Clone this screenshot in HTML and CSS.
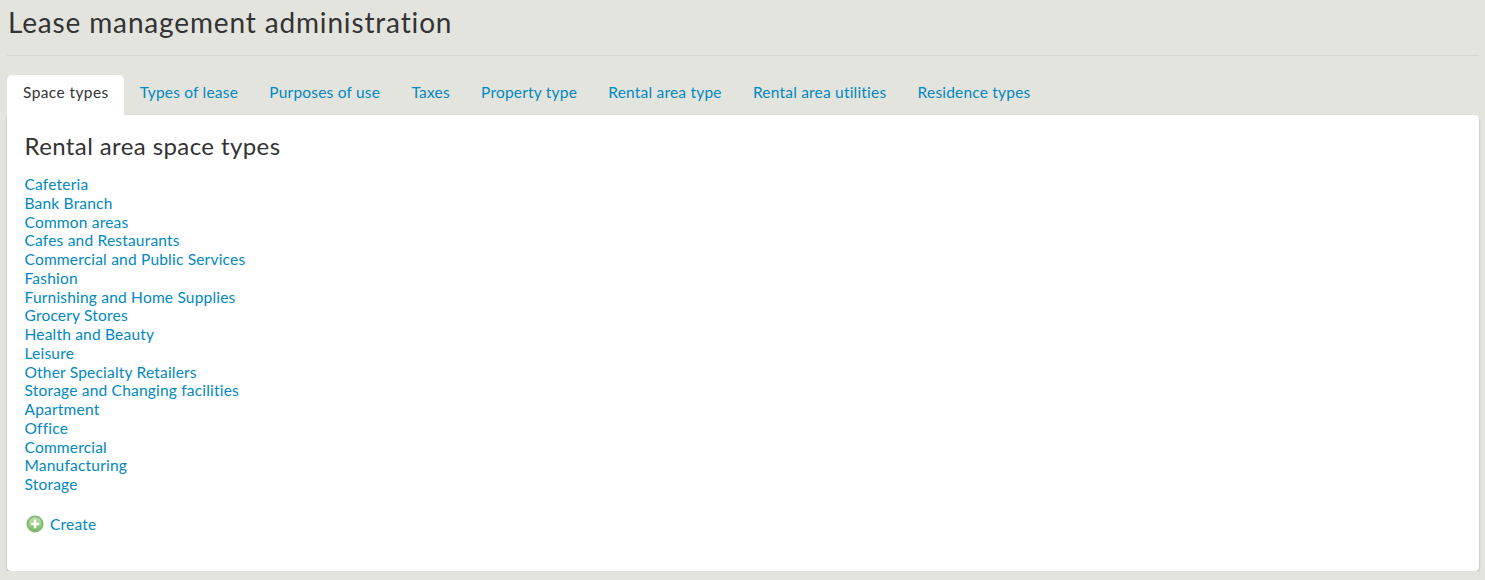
FILE: index.html
```html
<!DOCTYPE html>
<html lang="en">

	<head>
		<meta charset="UTF-8">
		<meta name="viewport" content="width=device-width, initial-scale=1.0">
		<title>Lease management administration</title>
		<link rel="stylesheet" href="styles.css">
	</head>

	<body>
		<h1 class="page-title">Lease management administration</h1>
		<div class="tabs">
			<a href="#" class="tab active">Space types</a>
			<a href="#" class="tab">Types of lease</a>
			<a href="#" class="tab">Purposes of use</a>
			<a href="#" class="tab">Taxes</a>
			<a href="#" class="tab">Property type</a>
			<a href="#" class="tab">Rental area type</a>
			<a href="#" class="tab">Rental area utilities</a>
			<a href="#" class="tab">Residence types</a>
		</div>
		<div class="panel">
			<h2 class="panel-title">Rental area space types</h2>
			<ul class="type-list">
				<li><a href="#">Cafeteria</a></li>
				<li><a href="#">Bank Branch</a></li>
				<li><a href="#">Common areas</a></li>
				<li><a href="#">Cafes and Restaurants</a></li>
				<li><a href="#">Commercial and Public Services</a></li>
				<li><a href="#">Fashion</a></li>
				<li><a href="#">Furnishing and Home Supplies</a></li>
				<li><a href="#">Grocery Stores</a></li>
				<li><a href="#">Health and Beauty</a></li>
				<li><a href="#">Leisure</a></li>
				<li><a href="#">Other Specialty Retailers</a></li>
				<li><a href="#">Storage and Changing facilities</a></li>
				<li><a href="#">Apartment</a></li>
				<li><a href="#">Office</a></li>
				<li><a href="#">Commercial</a></li>
				<li><a href="#">Manufacturing</a></li>
				<li><a href="#">Storage</a></li>
			</ul>
			<a href="#" class="create">
				<svg class="create-icon" width="18" height="18" viewBox="0 0 18 18">
					<defs>
						<linearGradient id="plus-bg" x1="0" y1="0" x2="0" y2="1">
							<stop offset="0" stop-color="#c4e4b0"/>
							<stop offset="1" stop-color="#74bb60"/>
						</linearGradient>
					</defs>
					<circle cx="9" cy="9" r="8.500" fill="#82b574"/>
					<circle cx="9" cy="9" r="6.800" fill="url(#plus-bg)"/>
					<path d="M7.800 4.800h2.400v3h3v2.400h-3v3H7.800v-3h-3V7.800h3z" fill="#fff"/>
				</svg>
				Create
			</a>
		</div>
	</body>

</html>
```

FILE: styles.css
```css
body {
	margin: 0;
	padding: 0 6px 0 7px;
	background: #e3e4de;
	color: #333;
	font-family: Lato, "Open Sans", sans-serif;
	font-size: 15.5px;
	letter-spacing: 0.2px;
}

a {
	text-decoration: none;
	color: #0088c2;
}

.page-title {
	margin: 0 0 19px;
	height: 56px;
	box-sizing: border-box;
	border-bottom: 1px solid #d5d6d0;
	padding-left: 1px;
	font-size: 28px;
	font-weight: 400;
	line-height: 45px;
	letter-spacing: 0.85px;
}

.tabs {
	display: flex;
	height: 40px;
}

.tab {
	padding: 0 15.65px;
	line-height: 34px;
}

.tab.active {
	padding: 0 15.5px 0 16px;
	background: #fff;
	border-radius: 5px 5px 0 0;
	color: #333;
	line-height: 34px;
	letter-spacing: 0.4px;
}

.panel {
	height: 456px;
	box-sizing: border-box;
	padding: 19px 17.5px;
	background: #fff;
	border-radius: 0 4px 4px 4px;
	box-shadow: 0 1px 2px rgba(0, 0, 0, 0.3);
}

.panel-title {
	margin: 0 0 17px;
	font-size: 24px;
	font-weight: 400;
	line-height: 24px;
	letter-spacing: 0.4px;
}

.type-list {
	margin: 0 0 20px;
	padding: 0;
	list-style: none;
	line-height: 18.75px;
}

.create {
	display: flex;
	align-items: center;
	gap: 6.5px;
	padding-left: 1px;
	line-height: 20px;
}
```
